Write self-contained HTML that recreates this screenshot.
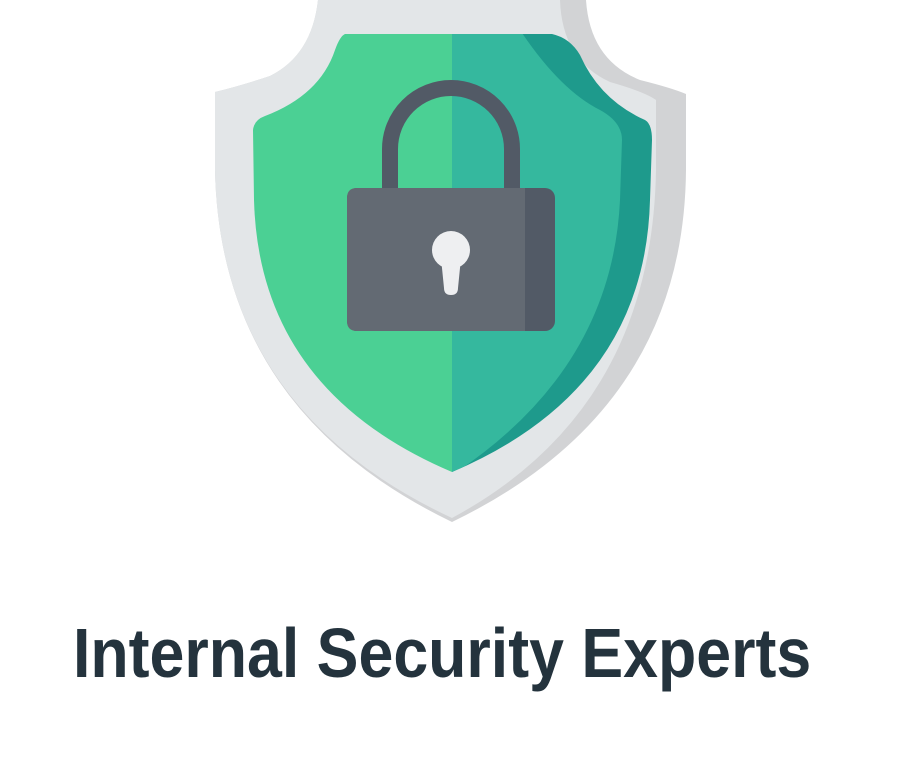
<!DOCTYPE html>
<html><head><meta charset="utf-8"><style>
html,body{margin:0;padding:0;background:#fff;width:902px;height:779px;overflow:hidden;position:relative}
svg{position:absolute;left:0;top:0}
.t{position:absolute;left:73px;top:618px;font-family:"Liberation Sans",sans-serif;font-weight:bold;font-size:70px;color:#24333d;white-space:nowrap;transform:scaleX(0.895);transform-origin:left top;line-height:1}
</style></head><body>
<svg width="902" height="779" viewBox="0 0 902 779">
<defs>
<clipPath id="g"><path d="M345 34 L552 34 Q570 38 580 55 Q600 100 645 120 Q652 124 652 140 L650 200 Q645 390 452 472 Q259 390 254 200 L253 130 Q254 120 265 116 Q320 95 335 50 Q340 36 345 34 Z"/></clipPath>
</defs>
<path d="M318 0 L586 0 Q590 60 640 80 Q672 88 686 94 L686 170 Q684 410 452 522 Q220 410 215 170 L215 92 Q240 86 270 76 Q312 55 318 0 Z" fill="#d2d3d5"/>
<path d="M318 0 L560 0 Q562 60 610 82 Q645 92 656 100 L656 170 Q652 410 452 518 Q220 410 215 170 L215 92 Q240 86 270 76 Q312 55 318 0 Z" fill="#e3e6e8"/>
<g clip-path="url(#g)">
<rect x="240" y="30" width="212" height="450" fill="#4bd094"/>
<rect x="452" y="30" width="210" height="450" fill="#1e9a8c"/>
<path d="M452 30 L520 30 Q560 90 600 110 Q622 122 622 140 L620 200 Q612 370 452 475 Z" fill="#35b89e"/>
</g>
<path d="M390 190 L390 149 A61 61 0 0 1 512 149 L512 190" fill="none" stroke="#525a66" stroke-width="16"/>
<rect x="347" y="188" width="208" height="143" rx="10" fill="#525a66"/>
<path d="M357 188 L525 188 L525 331 L357 331 Q347 331 347 321 L347 198 Q347 188 357 188 Z" fill="#636a73"/>
<circle cx="451" cy="250" r="19" fill="#eeeff1"/>
<path d="M441 258 L461 258 L458 288 Q458 295 451 295 Q444 295 444 288 Z" fill="#eeeff1"/>
</svg>
<div class="t">Internal Security Experts</div>
</body></html>
